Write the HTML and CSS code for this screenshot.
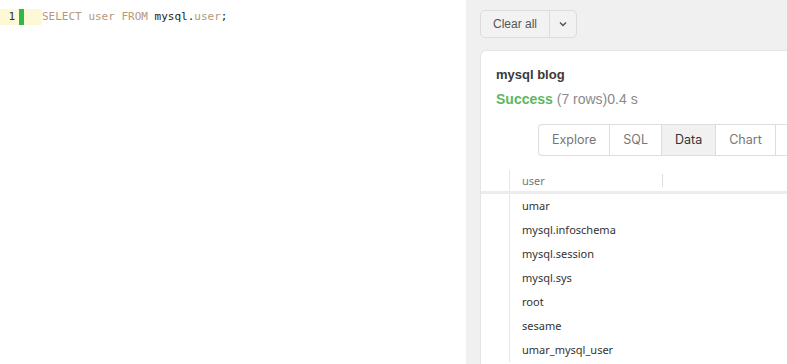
FILE: index.html
```html
<!DOCTYPE html>
<html lang="en">
<head>
<meta charset="UTF-8" />
<title>Query results</title>
<link rel="stylesheet" href="styles.css">
</head>
<body>
  <div class="editor">
    <div class="code-line">
      <span class="gutter">1</span><span class="marker"></span><span class="code"><span class="kw">SELECT</span> <span class="kw">user</span> <span class="kw">FROM</span> mysql.<span class="kw">user</span>;</span>
    </div>
  </div>
  <div class="results">
    <div class="btn-group">
      <button class="btn">Clear all</button>
      <button class="btn btn-caret">
        <svg width="10" height="6" viewBox="0 0 10 6"><path d="M2 1.5 5 4.5 8 1.5" fill="none" stroke="#555" stroke-width="1.5"/></svg>
      </button>
    </div>
    <div class="card">
      <div class="card-head">
        <div class="title">mysql blog</div>
        <div class="status"><span class="ok">Success</span> (7 rows)0.4 s</div>
      </div>
      <div class="tabs">
        <span class="tab">Explore</span>
        <span class="tab">SQL</span>
        <span class="tab active">Data</span>
        <span class="tab">Chart</span>
        <span class="tab tab-more"></span>
      </div>
      <div class="grid">
        <div class="grid-head">
          <span class="idx"></span>
          <span class="col">user</span>
          <span class="col rest"></span>
        </div>
        <div class="row"><span class="idx"></span><span class="cell">umar</span></div>
        <div class="row"><span class="idx"></span><span class="cell">mysql.infoschema</span></div>
        <div class="row"><span class="idx"></span><span class="cell">mysql.session</span></div>
        <div class="row"><span class="idx"></span><span class="cell">mysql.sys</span></div>
        <div class="row"><span class="idx"></span><span class="cell">root</span></div>
        <div class="row"><span class="idx"></span><span class="cell">sesame</span></div>
        <div class="row"><span class="idx"></span><span class="cell">umar_mysql_user</span></div>
      </div>
    </div>
  </div>
</body>
</html>
```

FILE: styles.css
```css
body {
    margin: 0;
    height: 100vh;
    display: flex;
    overflow: hidden;
    font-family: "Liberation Sans", Arial, sans-serif;
    background-color: #ffffff;
}
.editor {
    width: 466px;
    background-color: #ffffff;
    padding-top: 9px;
}
.code-line {
    display: flex;
    align-items: center;
    height: 16px;
    font-family: "DejaVu Sans Mono", monospace;
    font-size: 11px;
}
.gutter {
    width: 19px;
    height: 16px;
    line-height: 16px;
    padding-right: 4px;
    box-sizing: border-box;
    text-align: right;
    background-color: #fff8d4;
    color: #1d2c6b;
}
.marker {
    width: 5px;
    height: 16px;
    background-color: #2db84c;
}
.code {
    height: 16px;
    line-height: 16px;
    color: #222222;
    padding-left: 18px;
    background: linear-gradient(to right, #fff8d4 18px, transparent 18px);
}
.kw {
    color: #b7977a;
}
.results {
    flex: 1;
    background-color: #f0f0f0;
    padding: 10px 0 0 14px;
    overflow: hidden;
}
.btn-group {
    display: inline-flex;
    height: 28px;
    border: 1px solid #dcdcdc;
    border-radius: 5px;
    box-sizing: border-box;
    background-color: #f2f2f2;
}
.btn {
    border: none;
    background: none;
    font-family: "Liberation Sans", Arial, sans-serif;
    font-size: 12px;
    color: #555555;
    padding: 0 12px;
    cursor: pointer;
}
.btn-caret {
    border-left: 1px solid #dcdcdc;
    padding: 0 8px;
    display: flex;
    align-items: center;
}
.card {
    margin-top: 12px;
    background-color: #ffffff;
    border: 1px solid #e4e4e4;
    border-right: none;
    border-bottom: none;
    border-radius: 6px 0 0 0;
    height: 400px;
}
.card-head {
    padding: 16px 0 0 15px;
}
.title {
    font-size: 13px;
    font-weight: bold;
    color: #3a3a3a;
    line-height: 16px;
}
.status {
    margin-top: 8px;
    font-size: 14px;
    color: #8a8a8a;
    line-height: 16px;
}
.ok {
    color: #5cb85c;
    font-weight: bold;
}
.tabs {
    display: flex;
    margin: 17px 0 0 57px;
    border: 1px solid #dddddd;
    border-right: none;
    border-radius: 4px 0 0 4px;
    width: max-content;
}
.tab {
    font-family: Inter, sans-serif;
    font-size: 12.5px;
    color: #777777;
    padding: 0 13px;
    height: 30px;
    line-height: 30px;
    border-right: 1px solid #dddddd;
}
.tab.active {
    background-color: #f1f1f1;
    color: #333333;
}
.tab-more {
    width: 40px;
}
.grid {
    margin-top: 11px;
    font-family: "Noto Sans", sans-serif;
}
.grid-head {
    display: flex;
    height: 24px;
    align-items: center;
    border-bottom: 3px solid #ececec;
}
.idx {
    flex: none;
    width: 28px;
    align-self: stretch;
    border-right: 1px solid #e6e6e6;
}
.grid-head .idx {
    margin-top: 3px;
}
.col {
    flex: none;
    box-sizing: border-box;
    font-size: 11px;
    color: #777777;
    padding-left: 12px;
    margin-top: 3px;
    width: 153px;
    border-right: 1px solid #dddddd;
    line-height: 13px;
}
.col.rest {
    border-right: none;
}
.row {
    display: flex;
    height: 24px;
    align-items: center;
}
.cell {
    font-size: 11px;
    color: #333333;
    padding-left: 12px;
    padding-bottom: 2px;
}
```
